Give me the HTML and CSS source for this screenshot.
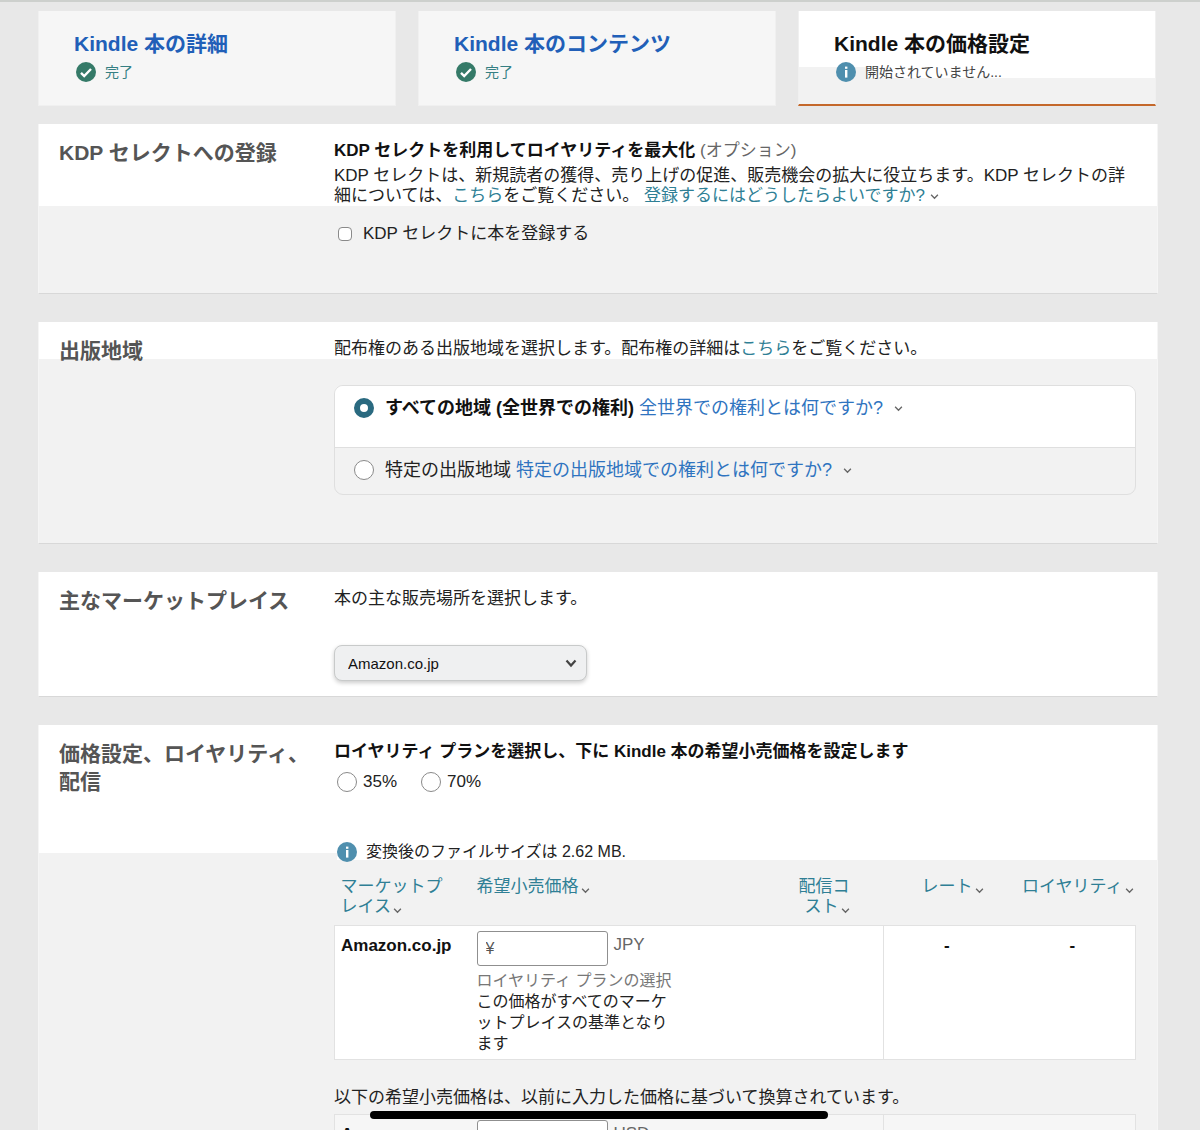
FILE: index.html
```html
<!DOCTYPE html>
<html lang="ja">
<head>
  <meta charset="UTF-8" />
  <meta name="viewport" content="width=device-width, initial-scale=1.0" />
  <title>Kindle 本の価格設定</title>
  <link rel="stylesheet" href="styles.css">
</head>
<body>
  <svg class="sprite" aria-hidden="true">
    <symbol id="check" viewBox="0 0 20 20">
      <circle cx="10" cy="10" r="10" fill="#357a68"/>
      <path d="M5 10.8l3.2 3.2L15 7" fill="none" stroke="#fff" stroke-width="2.4"/>
    </symbol>
    <symbol id="info" viewBox="0 0 20 20">
      <circle cx="10" cy="10" r="10" fill="#4f8fae"/>
      <rect x="9" y="4.6" width="2.4" height="2.2" fill="#fff"/>
      <rect x="9" y="8" width="2.4" height="7.6" fill="#fff"/>
    </symbol>
    <symbol id="caret" viewBox="0 0 8 8">
      <path d="M1 2.5l3 3 3-3" fill="none" stroke="currentColor" stroke-width="1.2"/>
    </symbol>
  </svg>

  <div class="page">
    <nav class="tabs">
      <a class="tab" href="#">
        <span class="tab-title">Kindle 本の詳細</span>
        <span class="tab-status done"><svg class="icon"><use href="#check"/></svg>完了</span>
      </a>
      <a class="tab" href="#">
        <span class="tab-title">Kindle 本のコンテンツ</span>
        <span class="tab-status done"><svg class="icon"><use href="#check"/></svg>完了</span>
      </a>
      <a class="tab active" href="#">
        <span class="tab-title">Kindle 本の価格設定</span>
        <span class="tab-status"><svg class="icon"><use href="#info"/></svg>開始されていません...</span>
      </a>
    </nav>

    <section class="card card-select">
      <h2>KDP セレクトへの登録</h2>
      <div class="content">
        <h3>KDP セレクトを利用してロイヤリティを最大化 <span class="optional">(オプション)</span></h3>
        <p class="intro">KDP セレクトは、新規読者の獲得、売り上げの促進、販売機会の拡大に役立ちます。KDP セレクトの詳細については、<a href="#">こちら</a>をご覧ください。 <a href="#">登録するにはどうしたらよいですか?</a> <svg class="caret"><use href="#caret"/></svg></p>
        <label class="check-row"><input type="checkbox"> KDP セレクトに本を登録する</label>
      </div>
    </section>

    <section class="card card-territory">
      <h2>出版地域</h2>
      <div class="content">
        <p>配布権のある出版地域を選択します。配布権の詳細は<a href="#">こちら</a>をご覧ください。</p>
        <div class="options">
          <div class="option selected">
            <input type="radio" name="territory" id="world" checked>
            <span><label for="world">すべての地域 (全世界での権利)</label> <a href="#">全世界での権利とは何ですか?</a></span>
            <svg class="caret"><use href="#caret"/></svg>
          </div>
          <div class="option">
            <input type="radio" name="territory" id="individual">
            <span><label for="individual">特定の出版地域</label> <a href="#">特定の出版地域での権利とは何ですか?</a></span>
            <svg class="caret"><use href="#caret"/></svg>
          </div>
        </div>
      </div>
    </section>

    <section class="card card-market">
      <h2>主なマーケットプレイス</h2>
      <div class="content">
        <p><label for="marketplace">本の主な販売場所を選択します。</label></p>
        <div class="select-box">
          <select id="marketplace">
            <option>Amazon.co.jp</option>
            <option>Amazon.com</option>
          </select>
          <svg class="select-arrow" viewBox="0 0 12 12"><path d="M1.5 3.5L6 8.5l4.500-5" fill="none" stroke="#444" stroke-width="2.200"/></svg>
        </div>
      </div>
    </section>

    <section class="card card-price">
      <h2>価格設定、ロイヤリティ、配信</h2>
      <div class="content">
        <h3>ロイヤリティ プランを選択し、下に Kindle 本の希望小売価格を設定します</h3>
        <div class="plans">
          <label><input type="radio" name="plan">35%</label>
          <label><input type="radio" name="plan">70%</label>
        </div>
        <p class="file-size"><svg class="icon"><use href="#info"/></svg>変換後のファイルサイズは 2.62 MB.</p>

        <table class="prices">
          <colgroup>
            <col class="c-market"><col><col class="c-cost"><col class="c-rate"><col class="c-rate">
          </colgroup>
          <thead>
            <tr>
              <th><a href="#">マーケットプレイス</a><svg class="caret"><use href="#caret"/></svg></th>
              <th><a href="#">希望小売価格</a><svg class="caret"><use href="#caret"/></svg></th>
              <th class="h-cost"><a href="#">配信コスト</a><svg class="caret"><use href="#caret"/></svg></th>
              <th class="h-rate"><a href="#">レート</a><svg class="caret"><use href="#caret"/></svg></th>
              <th class="h-royalty"><a href="#">ロイヤリティ</a><svg class="caret"><use href="#caret"/></svg></th>
            </tr>
          </thead>
          <tbody>
            <tr>
              <td class="market">Amazon.co.jp</td>
              <td colspan="2">
                <div class="price"><input type="text" placeholder="¥" aria-label="希望小売価格 JPY"><span>JPY</span></div>
                <div class="note"><span class="hint">ロイヤリティ プランの選択</span><br>この価格がすべてのマーケットプレイスの基準となります</div>
              </td>
              <td class="value first">-</td>
              <td class="value">-</td>
            </tr>
          </tbody>
        </table>

        <p class="converted">以下の希望小売価格は、以前に入力した価格に基づいて換算されています。</p>

        <table class="prices other">
          <colgroup>
            <col class="c-market"><col><col class="c-cost"><col class="c-rate"><col class="c-rate">
          </colgroup>
          <tbody>
            <tr>
              <td class="market">Amazon.com</td>
              <td colspan="2">
                <div class="price"><input type="text" placeholder="$" aria-label="希望小売価格 USD"><span>USD</span></div>
              </td>
              <td class="value first"></td>
              <td class="value"></td>
            </tr>
          </tbody>
        </table>
      </div>
    </section>
  </div>
  <div class="home-bar"></div>
</body>
</html>
```
FILE: styles.css
```css
* {
  box-sizing: border-box;
}
body {
  margin: 0;
  background: #e8e8e8;
  color: #222;
  font-family: "Liberation Sans", "Noto Sans CJK JP", sans-serif;
  font-size: 17px;
  line-height: 20px;
}
h2, h3, p {
  margin: 0;
}
a {
  color: #2f7f95;
  text-decoration: none;
}
.sprite {
  display: none;
}
.icon {
  width: 20px;
  height: 20px;
  flex: none;
}
.caret {
  width: 9px;
  height: 9px;
  color: #666;
}
.page {
  border-top: 2px solid #cdd0cd;
  padding: 9px 42px 0 38px;
}

/* steps */
.tabs {
  display: grid;
  grid-template-columns: repeat(3, 1fr);
  gap: 22px;
  margin: 0 2px 18px 0;
}
.tab {
  height: 95px;
  padding: 19px 0 0 35px;
  background: #f6f6f6;
  border: 1px solid #f0f0f0;
  border-top: 0;
  color: #111;
}
.tab.active {
  background:
    linear-gradient(#fff 56px, #f2f2f2 56px) left / 68px 100% no-repeat,
    linear-gradient(#fff 67px, #f2f2f2 67px);
  border-bottom: 2px solid #c4682b;
}
.tab-title {
  display: block;
  font-size: 21px;
  font-weight: bold;
  line-height: 28px;
}
.tab:not(.active) .tab-title {
  color: #215fb8;
}
.tab-status {
  display: flex;
  align-items: center;
  gap: 9px;
  margin: 4px 0 0 2px;
  font-size: 14px;
  color: #444;
}
.tab-status.done {
  color: #357f83;
}

/* cards */
.card {
  display: grid;
  grid-template-columns: 253px 1fr;
  column-gap: 22px;
  margin-bottom: 28px;
  padding: 15px 21px 15px 20px;
  background: #fff;
  border: 1px solid #f5f5f5;
  border-top: 0;
  border-bottom-color: #d8d8d8;
}
.card h2 {
  color: #555;
  font-size: 21px;
  line-height: 28px;
}
.content {
  padding-top: 2px;
}
.content h3 {
  color: #111;
  font-size: 17px;
}
.card-select {
  padding-bottom: 49px;
  background: linear-gradient(#fff 82px, #f2f2f2 82px);
}
.card-territory {
  padding-bottom: 48px;
  background: linear-gradient(#fff 37px, #f2f2f2 37px);
}
.card-price {
  background:
    linear-gradient(#fff 128px, #f2f2f2 128px) left / 298px 100% no-repeat,
    linear-gradient(#fff 135px, #f2f2f2 135px);
}
.optional {
  color: #666;
  font-weight: normal;
}
.intro {
  margin-top: 5px;
}

/* form controls */
.check-row {
  display: flex;
  align-items: center;
  gap: 11px;
  margin-top: 18px;
}
input[type="checkbox"],
input[type="radio"] {
  appearance: none;
  flex: none;
  margin: 0;
  background: #fff;
  border: 1px solid #8a8a8a;
}
input[type="checkbox"] {
  width: 14px;
  height: 14px;
  margin-left: 4px;
  border-radius: 4px;
}
input[type="radio"] {
  width: 20px;
  height: 20px;
  border-radius: 50%;
}
input[type="radio"]:checked {
  border: 6px solid #2a6a80;
}
.options {
  margin-top: 26px;
  border: 1px solid #dfdfdf;
  border-radius: 9px;
  overflow: hidden;
}
.option {
  display: flex;
  align-items: center;
  gap: 11px;
  padding: 12px 19px 14px;
  font-size: 18px;
}
.option a {
  color: #2f74c0;
}
.option.selected {
  padding-bottom: 29px;
  background: #fff;
  border-bottom: 1px solid #dfdfdf;
}
.option.selected label {
  color: #111;
  font-weight: bold;
}
.select-box {
  position: relative;
  width: 253px;
  margin-top: 36px;
}
.select-box select {
  appearance: none;
  display: block;
  width: 100%;
  height: 36px;
  padding: 0 13px;
  background: #eff0f1;
  border: 1px solid #c8caca;
  border-radius: 8px;
  box-shadow: 0 2px 4px rgba(0,0,0,0.2);
  color: #111;
  font-family: inherit;
  font-size: 15px;
}
.select-arrow {
  position: absolute;
  top: 12px;
  right: 10px;
  width: 12px;
  height: 12px;
  pointer-events: none;
}
.plans {
  display: flex;
  gap: 24px;
  margin: 10px 0 0 3px;
}
.plans label {
  display: flex;
  align-items: center;
  gap: 6px;
}
.file-size {
  display: flex;
  align-items: center;
  gap: 9px;
  margin: 50px 0 15px 3px;
  font-size: 16px;
}

/* price tables */
.prices {
  width: 100%;
  table-layout: fixed;
  border-collapse: collapse;
  line-break: anywhere;
}
.c-market {
  width: 136px;
}
.c-cost {
  width: 100px;
}
.c-rate {
  width: 126px;
}
.prices th {
  padding: 0 20px 8px 6px;
  font-weight: normal;
  text-align: left;
  vertical-align: top;
}
.prices th .caret {
  margin-left: 2px;
  vertical-align: -3px;
}
.prices .h-cost {
  padding-right: 34px;
  text-align: right;
}
.prices .h-rate {
  padding-right: 26px;
  text-align: right;
}
.prices .h-royalty {
  padding-right: 2px;
  text-align: right;
}
.prices tbody tr {
  background: #fff;
  border: 1px solid #e2e2e2;
}
.prices.other tbody tr {
  background: #f6f6f6;
}
.prices td {
  padding: 5px 6px;
  vertical-align: top;
}
.prices .market,
.prices .value {
  padding-top: 10px;
  color: #111;
  font-weight: bold;
}
.prices .value {
  text-align: center;
}
.prices .first {
  border-left: 1px solid #e2e2e2;
}
.price {
  display: flex;
  gap: 6px;
  color: #666;
  line-height: 28px;
}
.price input {
  width: 131px;
  height: 35px;
  padding: 0 8px;
  background: #fff;
  border: 1px solid #8f8f8f;
  border-radius: 3px;
  font-family: inherit;
  font-size: 16px;
}
.price input::placeholder {
  color: #555;
}
.note {
  width: 200px;
  margin-top: 4px;
  font-size: 16px;
  line-height: 21px;
}
.hint {
  color: #777;
}
.converted {
  margin: 28px 0 6px;
}

.home-bar {
  position: fixed;
  bottom: 11px;
  left: 50%;
  width: 458px;
  height: 8px;
  margin-left: -230px;
  background: #000;
  border-radius: 4px;
}
```
